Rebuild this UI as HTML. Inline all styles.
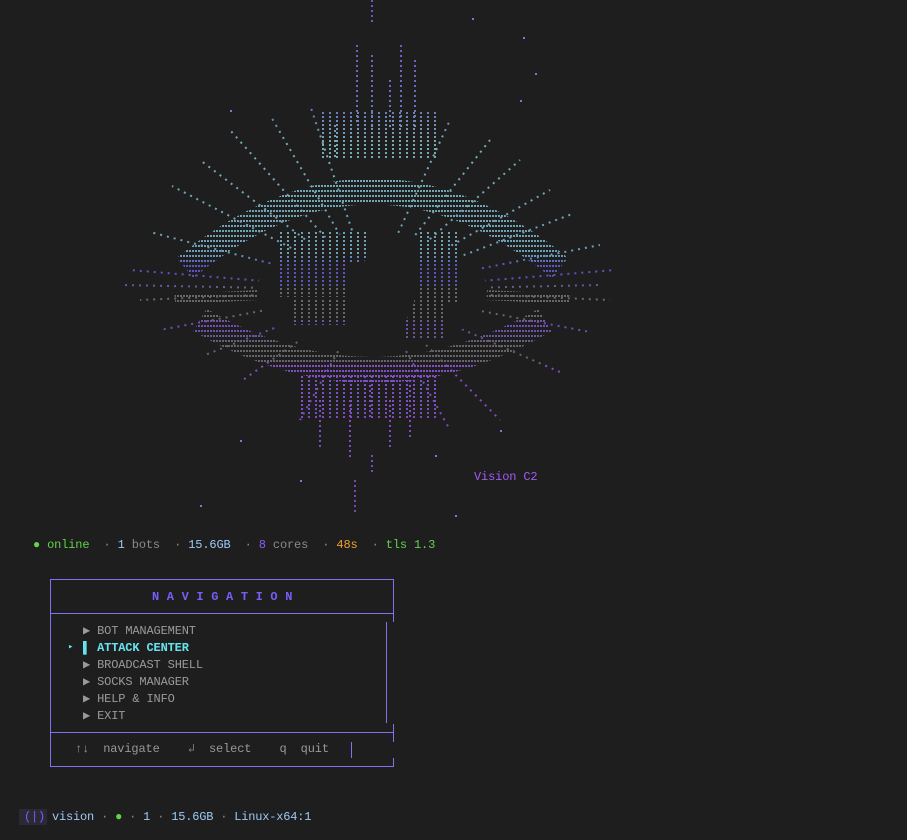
<!DOCTYPE html>
<html><head><meta charset="utf-8"><style>
html,body{margin:0;padding:0;background:#1e1e1e;width:907px;height:840px;overflow:hidden}
body{position:relative;font-family:"Liberation Mono",monospace;font-size:12px;color:#9a9a9a}
.t{position:absolute;white-space:pre;line-height:14px;letter-spacing:-0.15px}
.g{color:#5fd34a}.b{color:#9cc8f5}.p{color:#8b5cf6}.o{color:#f0a030}.gr{color:#8a8a8a}
.ln{position:absolute;background:#7f73ee}
</style></head><body>
<svg width="907" height="530" style="position:absolute;left:0;top:0">
<defs>
<pattern id="d" width="3" height="5" patternUnits="userSpaceOnUse"><rect width="2" height="2" fill="#fff"/></pattern>
<pattern id="s" width="7" height="4" patternUnits="userSpaceOnUse"><rect width="2" height="2" fill="#fff"/></pattern>
<linearGradient id="gc" x1="0" y1="0" x2="0" y2="530" gradientUnits="userSpaceOnUse">
<stop offset="0" stop-color="#8a5cf0"/><stop offset="0.2" stop-color="#7d86e8"/>
<stop offset="0.27" stop-color="#8fd0d8"/><stop offset="0.48" stop-color="#7fc0dc"/>
<stop offset="0.5" stop-color="#6a62ee"/><stop offset="0.535" stop-color="#6a62ee"/>
<stop offset="0.545" stop-color="#7a7a7a"/><stop offset="0.6" stop-color="#7a7a7a"/>
<stop offset="0.61" stop-color="#8b55e8"/><stop offset="0.64" stop-color="#7c6aa8"/>
<stop offset="0.65" stop-color="#777"/><stop offset="0.68" stop-color="#777"/>
<stop offset="0.69" stop-color="#9a5cf0"/><stop offset="1" stop-color="#8a4fe0"/>
</linearGradient>
<mask id="m">
<g stroke="#fff" stroke-width="2" stroke-dasharray="2 5" fill="none">
<path d="M372 290L130 270M372 290L150 232M372 290L172 186M372 290L200 160M372 290L230 130M372 290L270 115M372 290L310 105M372 290L615 270M372 290L600 245M372 290L572 214M372 290L550 190M372 290L520 160M372 290L490 140M372 290L450 120M372 290L140 300M372 290L160 330M372 290L205 355M372 290L240 382M372 290L300 420M372 290L450 430M372 290L500 420M372 290L560 372M372 290L590 332M372 290L610 300M372 290L120 285M372 290L600 285"/>
</g>
<g stroke="url(#d)" fill="none">
<path d="M185 268 Q372 115 560 268" stroke-width="26"/>
<path d="M175 300 Q372 285 570 300" stroke-width="10"/>
<path d="M200 320 Q372 420 545 320" stroke-width="26"/>
</g>
<g fill="url(#s)">
<rect x="320" y="110" width="120" height="48"/>
<rect x="300" y="375" width="140" height="45"/>
</g>
<g stroke="#fff" stroke-width="2" stroke-dasharray="2 3">
<path d="M372 0V25M357 45V125M372 55V130M390 80V130M401 45V130M415 60V130M335 125V160M320 400V450M350 400V460M370 380V420M390 400V450M410 380V440M355 480V515M372 455V475"/>
</g>
<ellipse cx="372" cy="292" rx="115" ry="60" fill="#000"/>
<g fill="url(#s)">
<path d="M278 232h90v30h-20v35h-70z"/>
<path d="M420 232h40v70h-40z"/>
<path d="M290 300h60v25h-60z"/>
<path d="M405 300h40v40h-40z"/>
</g>
<ellipse cx="388" cy="285" rx="28" ry="45" fill="#000"/>
</mask>
</defs>
<rect width="907" height="530" fill="url(#gc)" mask="url(#m)" opacity="0.8"/>
<g fill="#8a6fe0"><rect x="472" y="18" width="2" height="2"/><rect x="523" y="37" width="2" height="2"/><rect x="535" y="73" width="2" height="2"/><rect x="520" y="100" width="2" height="2"/><rect x="230" y="110" width="2" height="2"/><rect x="240" y="440" width="2" height="2"/><rect x="200" y="505" width="2" height="2"/><rect x="455" y="515" width="2" height="2"/><rect x="500" y="430" width="2" height="2"/><rect x="435" y="455" width="2" height="2"/><rect x="300" y="480" width="2" height="2"/></g>
</svg>
<div class="t" style="left:474px;top:470px;color:#a25cf5">Vision C2</div>
<div class="t" style="left:33px;top:538px"><span class="g">● online</span>  <span class="gr">·</span> <span class="b">1</span> <span class="gr">bots</span>  <span class="gr">·</span> <span class="b">15.6GB</span>  <span class="gr">·</span> <span class="p">8</span> <span class="gr">cores</span>  <span class="gr">·</span> <span class="o">48s</span>  <span class="gr">·</span> <span class="g">tls 1.3</span></div>
<div class="ln" style="left:50px;top:579px;width:344px;height:1px"></div>
<div class="ln" style="left:50px;top:579px;width:1px;height:188px"></div>
<div class="ln" style="left:50px;top:766px;width:344px;height:1px"></div>
<div class="ln" style="left:50px;top:613px;width:344px;height:1px"></div>
<div class="ln" style="left:50px;top:732px;width:344px;height:1px"></div>
<div class="ln" style="left:393px;top:579px;width:1px;height:43px"></div>
<div class="ln" style="left:393px;top:724px;width:1px;height:18px"></div>
<div class="ln" style="left:393px;top:758px;width:1px;height:9px"></div>
<div class="ln" style="left:386px;top:622px;width:1px;height:101px"></div>
<div class="ln" style="left:351px;top:742px;width:1px;height:16px"></div>
<div class="t" style="left:152px;top:590px;color:#7b5cf8;font-weight:bold;letter-spacing:0.2px">N A V I G A T I O N</div>
<div class="t" style="left:83px;top:623px;line-height:17px;color:#9a9a9a">▶ BOT MANAGEMENT
<span style="color:#67e3f0;font-weight:bold">▌ ATTACK CENTER</span>
▶ BROADCAST SHELL
▶ SOCKS MANAGER
▶ HELP &amp; INFO
▶ EXIT</div>
<div class="t" style="left:68px;top:640px;color:#67e3f0;font-size:9px">▸</div>
<div class="t" style="left:75px;top:742px;color:#999">↑↓  navigate    <span style="color:#777">↲</span>  select    q  quit</div>
<div style="position:absolute;left:19px;top:809px;width:28px;height:16px;background:#2a2a36"></div>
<div class="t" style="left:24px;top:810px;letter-spacing:-0.2px"><span style="color:#7b5cf8">(|)</span> <span class="b">vision</span> <span class="gr">·</span> <span class="g">●</span> <span class="gr">·</span> <span class="b">1</span> <span class="gr">·</span> <span class="b">15.6GB</span> <span class="gr">·</span> <span class="b">Linux-x64:1</span></div>
</body></html>
